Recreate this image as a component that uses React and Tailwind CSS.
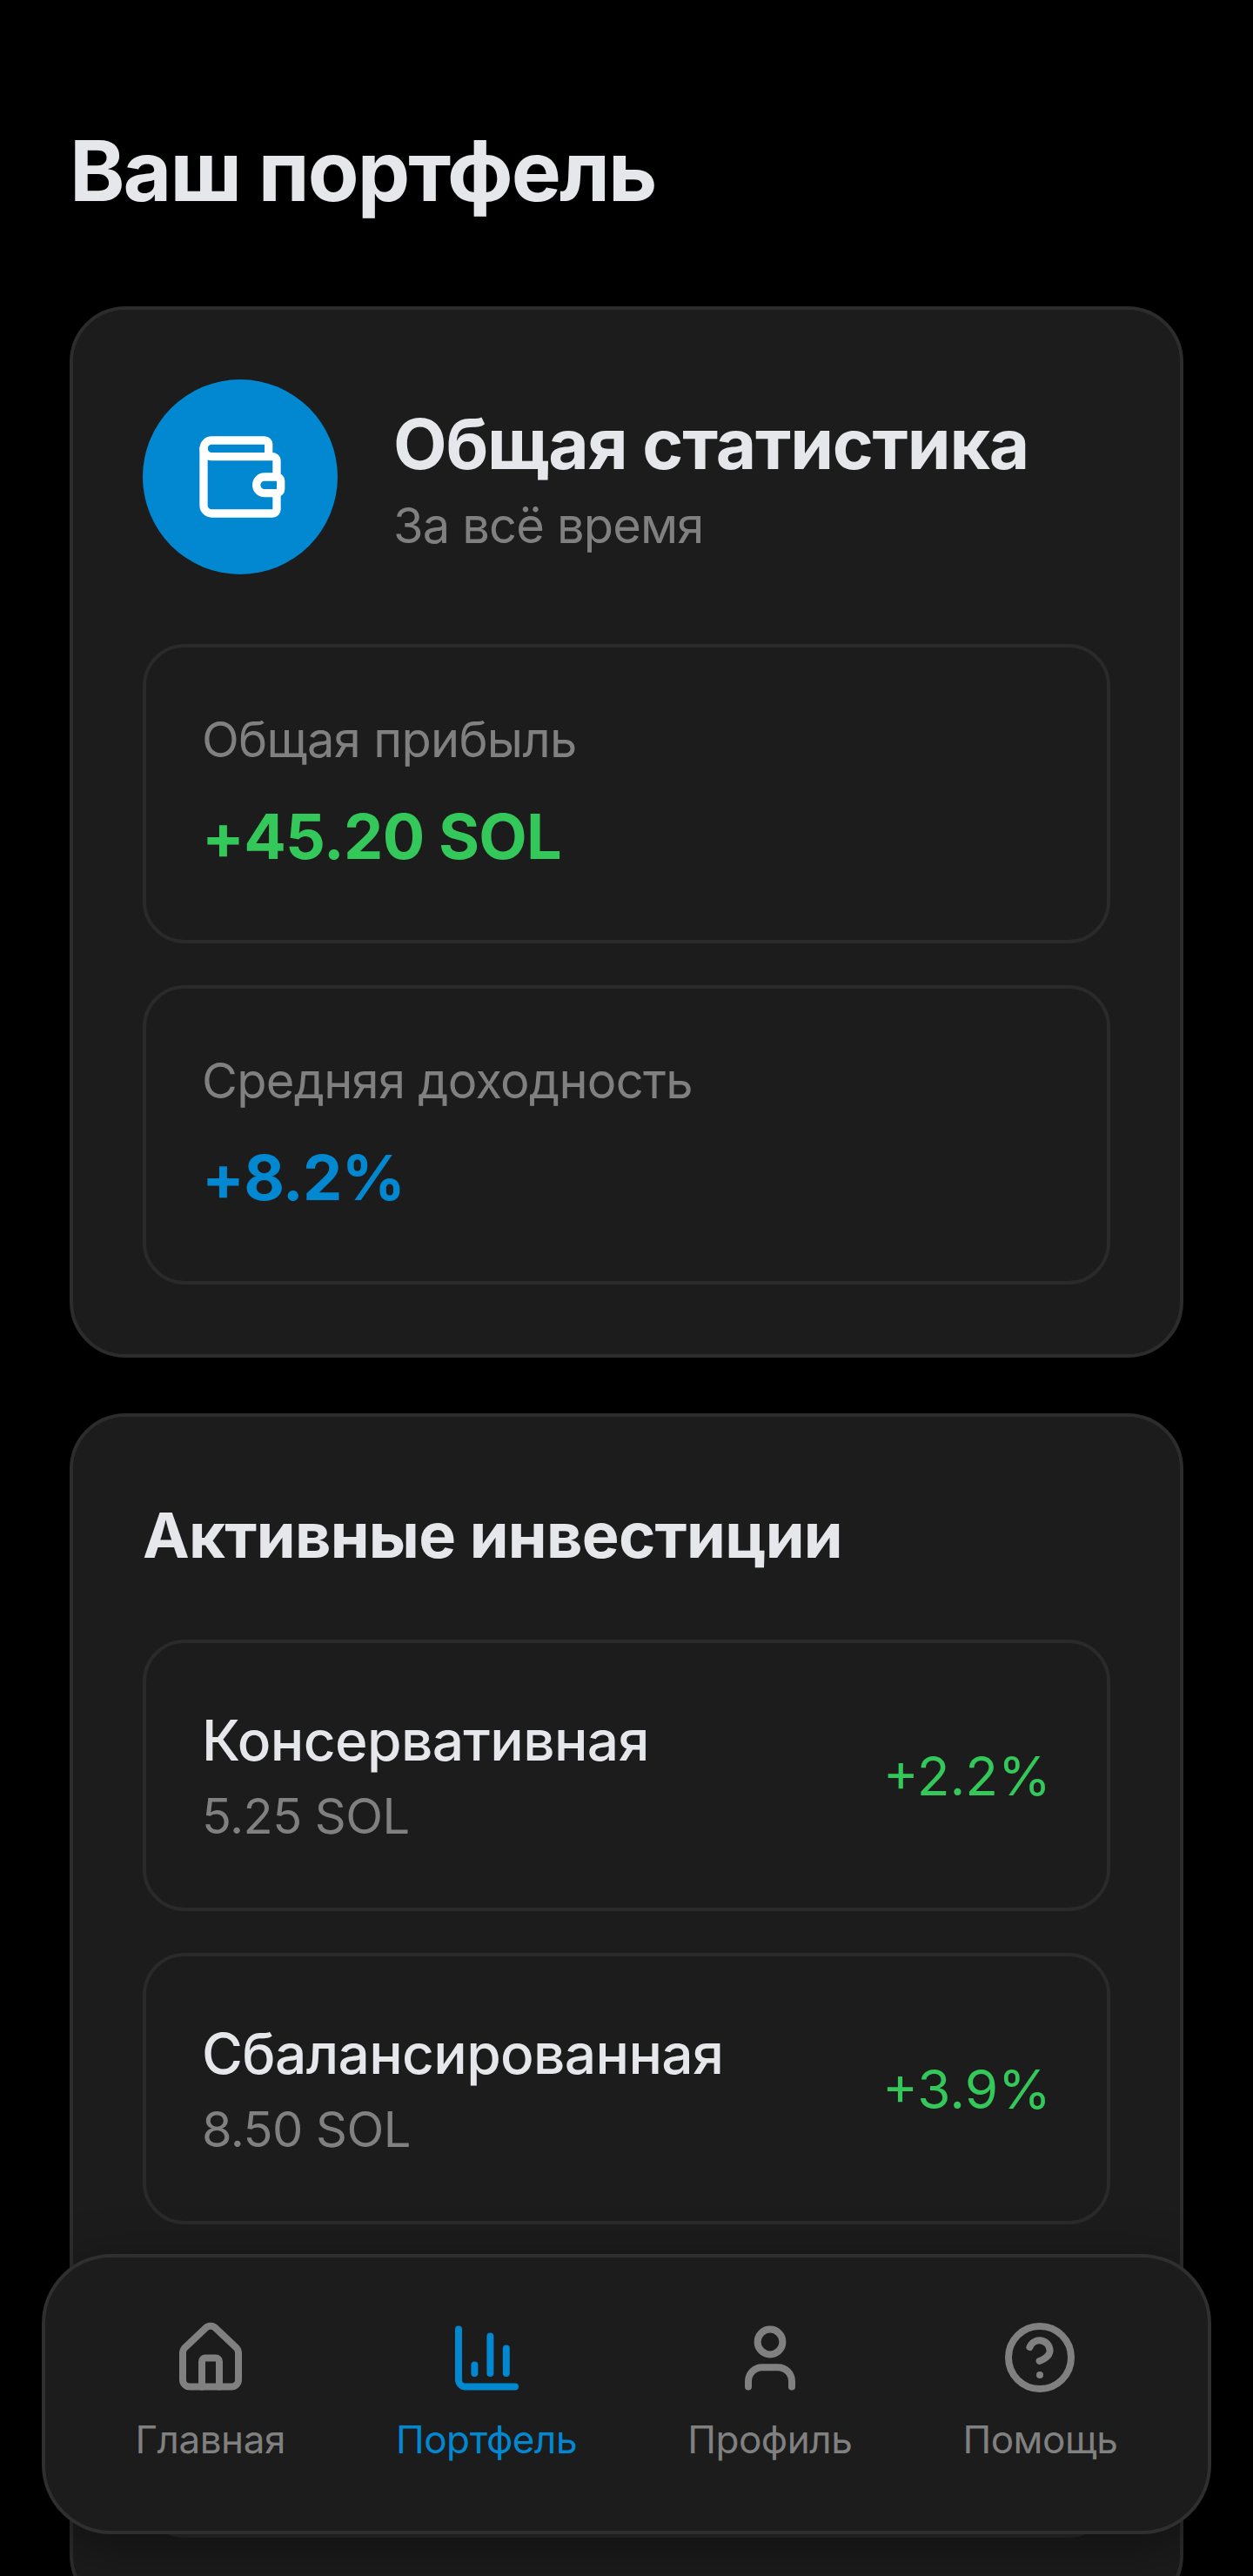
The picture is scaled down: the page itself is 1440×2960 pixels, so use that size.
import { Wallet } from "lucide-react";

const investments = [
  { name: "Консервативная", amount: "5.25 SOL", pct: "+2.2%" },
  { name: "Сбалансированная", amount: "8.50 SOL", pct: "+3.9%" },
];

// nav icons are drawn by hand, lucide's are a bit wider than the reference
function NavIcon({ children }) {
  return (
    <svg
      width="96"
      height="96"
      viewBox="0 0 24 24"
      fill="none"
      stroke="currentColor"
      strokeWidth="2"
      strokeLinecap="round"
      strokeLinejoin="round"
    >
      {children}
    </svg>
  );
}

const navItems = [
  {
    label: "Главная",
    icon: (
      <>
        <path d="M4 10.6a2 2 0 0 1 .5-1.3l6-5.7a2 2 0 0 1 3 0l6 5.7a2 2 0 0 1 .5 1.3v7.8a2 2 0 0 1-2 2H6a2 2 0 0 1-2-2z" />
        <path d="M9.5 20.4v-7.3a1 1 0 0 1 1-1h3a1 1 0 0 1 1 1v7.3" />
      </>
    ),
  },
  {
    label: "Портфель",
    active: true,
    icon: (
      <>
        <path d="M4 3.9v14.5a2 2 0 0 0 2 2h14.25" />
        <path d="M8.6 16.5v-2.4" />
        <path d="M13.1 16.5V5.9" />
        <path d="M17.7 16.5V9.4" />
      </>
    ),
  },
  {
    label: "Профиль",
    icon: (
      <>
        <circle cx="12" cy="7.5" r="3.6" />
        <path d="M5.75 20.4v-1.6a4 4 0 0 1 4-4h4.5a4 4 0 0 1 4 4v1.6" />
      </>
    ),
  },
  {
    label: "Помощь",
    icon: (
      <>
        <circle cx="12" cy="12" r="9" />
        <path d="M9.1 9a3 3 0 0 1 5.8 1c0 2-3 3-3 3" />
        <path d="M12 17h.01" />
      </>
    ),
  },
];

function StatBox({ label, value, valueClass }) {
  return (
    <div className="h-[344px] rounded-[48px] border-4 border-[#2a2a2a] px-[64px] pt-[70px]">
      <p className="text-[56px] leading-[72px] tracking-[-0.0125em] text-[#808080]">{label}</p>
      <p className={`mt-[27px] text-[72px] leading-[96px] font-bold tracking-[-0.01em] ${valueClass}`}>{value}</p>
    </div>
  );
}

export default function App() {
  return (
    <div className="relative h-[2960px] overflow-hidden bg-black font-['Inter',sans-serif]">
      <div className="px-[80px] pt-[136px]">
        <h1 className="text-[96px] leading-[120px] font-bold tracking-[-0.02em] text-[#e5e7eb]">Ваш портфель</h1>

        <section className="mt-[96px] rounded-[64px] border-4 border-[#2c2c2c] bg-[#1c1c1c] p-[80px]">
          <div className="flex items-center gap-[64px]">
            <div className="flex h-[224px] w-[224px] items-center justify-center rounded-full bg-[#0288d1]">
              <Wallet size={112} color="#fff" strokeWidth={2} />
            </div>
            <div className="pt-[6px]">
              <h2 className="text-[80px] leading-[96px] font-bold tracking-[-0.015em] text-[#e5e7eb]">Общая статистика</h2>
              <p className="mt-[10px] text-[56px] leading-[72px] tracking-[-0.015em] text-[#808080]">За всё время</p>
            </div>
          </div>
          <div className="mt-[80px] flex flex-col gap-[48px]">
            <StatBox label="Общая прибыль" value="+45.20 SOL" valueClass="text-[#34c759]" />
            <StatBox label="Средняя доходность" value="+8.2%" valueClass="text-[#0288d1]" />
          </div>
        </section>

        <section className="mt-[64px] rounded-[64px] border-4 border-[#2c2c2c] bg-[#1c1c1c] px-[80px] pt-[92px] pb-[80px]">
          <h2 className="text-[72px] leading-[88px] font-bold tracking-[-0.01em] text-[#e5e7eb]">Активные инвестиции</h2>
          <div className="mt-[76px] flex flex-col gap-[48px]">
            {investments.map((item) => (
              <div
                key={item.name}
                className="flex h-[312px] items-center justify-between rounded-[48px] border-4 border-[#2a2a2a] px-[64px]"
              >
                <div>
                  <p className="text-[64px] leading-[84px] font-medium tracking-[-0.01em] text-[#e5e7eb]">{item.name}</p>
                  <p className="mt-[9px] text-[56px] leading-[72px] tracking-[-0.01em] text-[#808080]">{item.amount}</p>
                </div>
                <p className="pt-[2px] text-[62px] leading-[84px] text-[#34c759]">{item.pct}</p>
              </div>
            ))}
            {/* third row sits behind the nav, only its bottom edge shows */}
            <div className="h-[312px] rounded-[48px] border-4 border-[#2a2a2a]" />
          </div>
        </section>
      </div>

      <nav className="absolute top-[2590px] left-[48px] flex h-[322px] w-[1344px] items-center justify-around rounded-[80px] border-4 border-[#2f2f2f] bg-[#1c1c1c] px-[40px] pb-[8px] shadow-[0_16px_64px_rgba(0,0,0,0.4)]">
        {navItems.map((item) => (
          <div
            key={item.label}
            className={`flex flex-col items-center gap-[16px] ${item.active ? "text-[#0288d1]" : "text-[#808080]"}`}
          >
            <NavIcon>{item.icon}</NavIcon>
            <span className="text-[44px] leading-[60px] tracking-[-0.01em]">{item.label}</span>
          </div>
        ))}
      </nav>
    </div>
  );
}
